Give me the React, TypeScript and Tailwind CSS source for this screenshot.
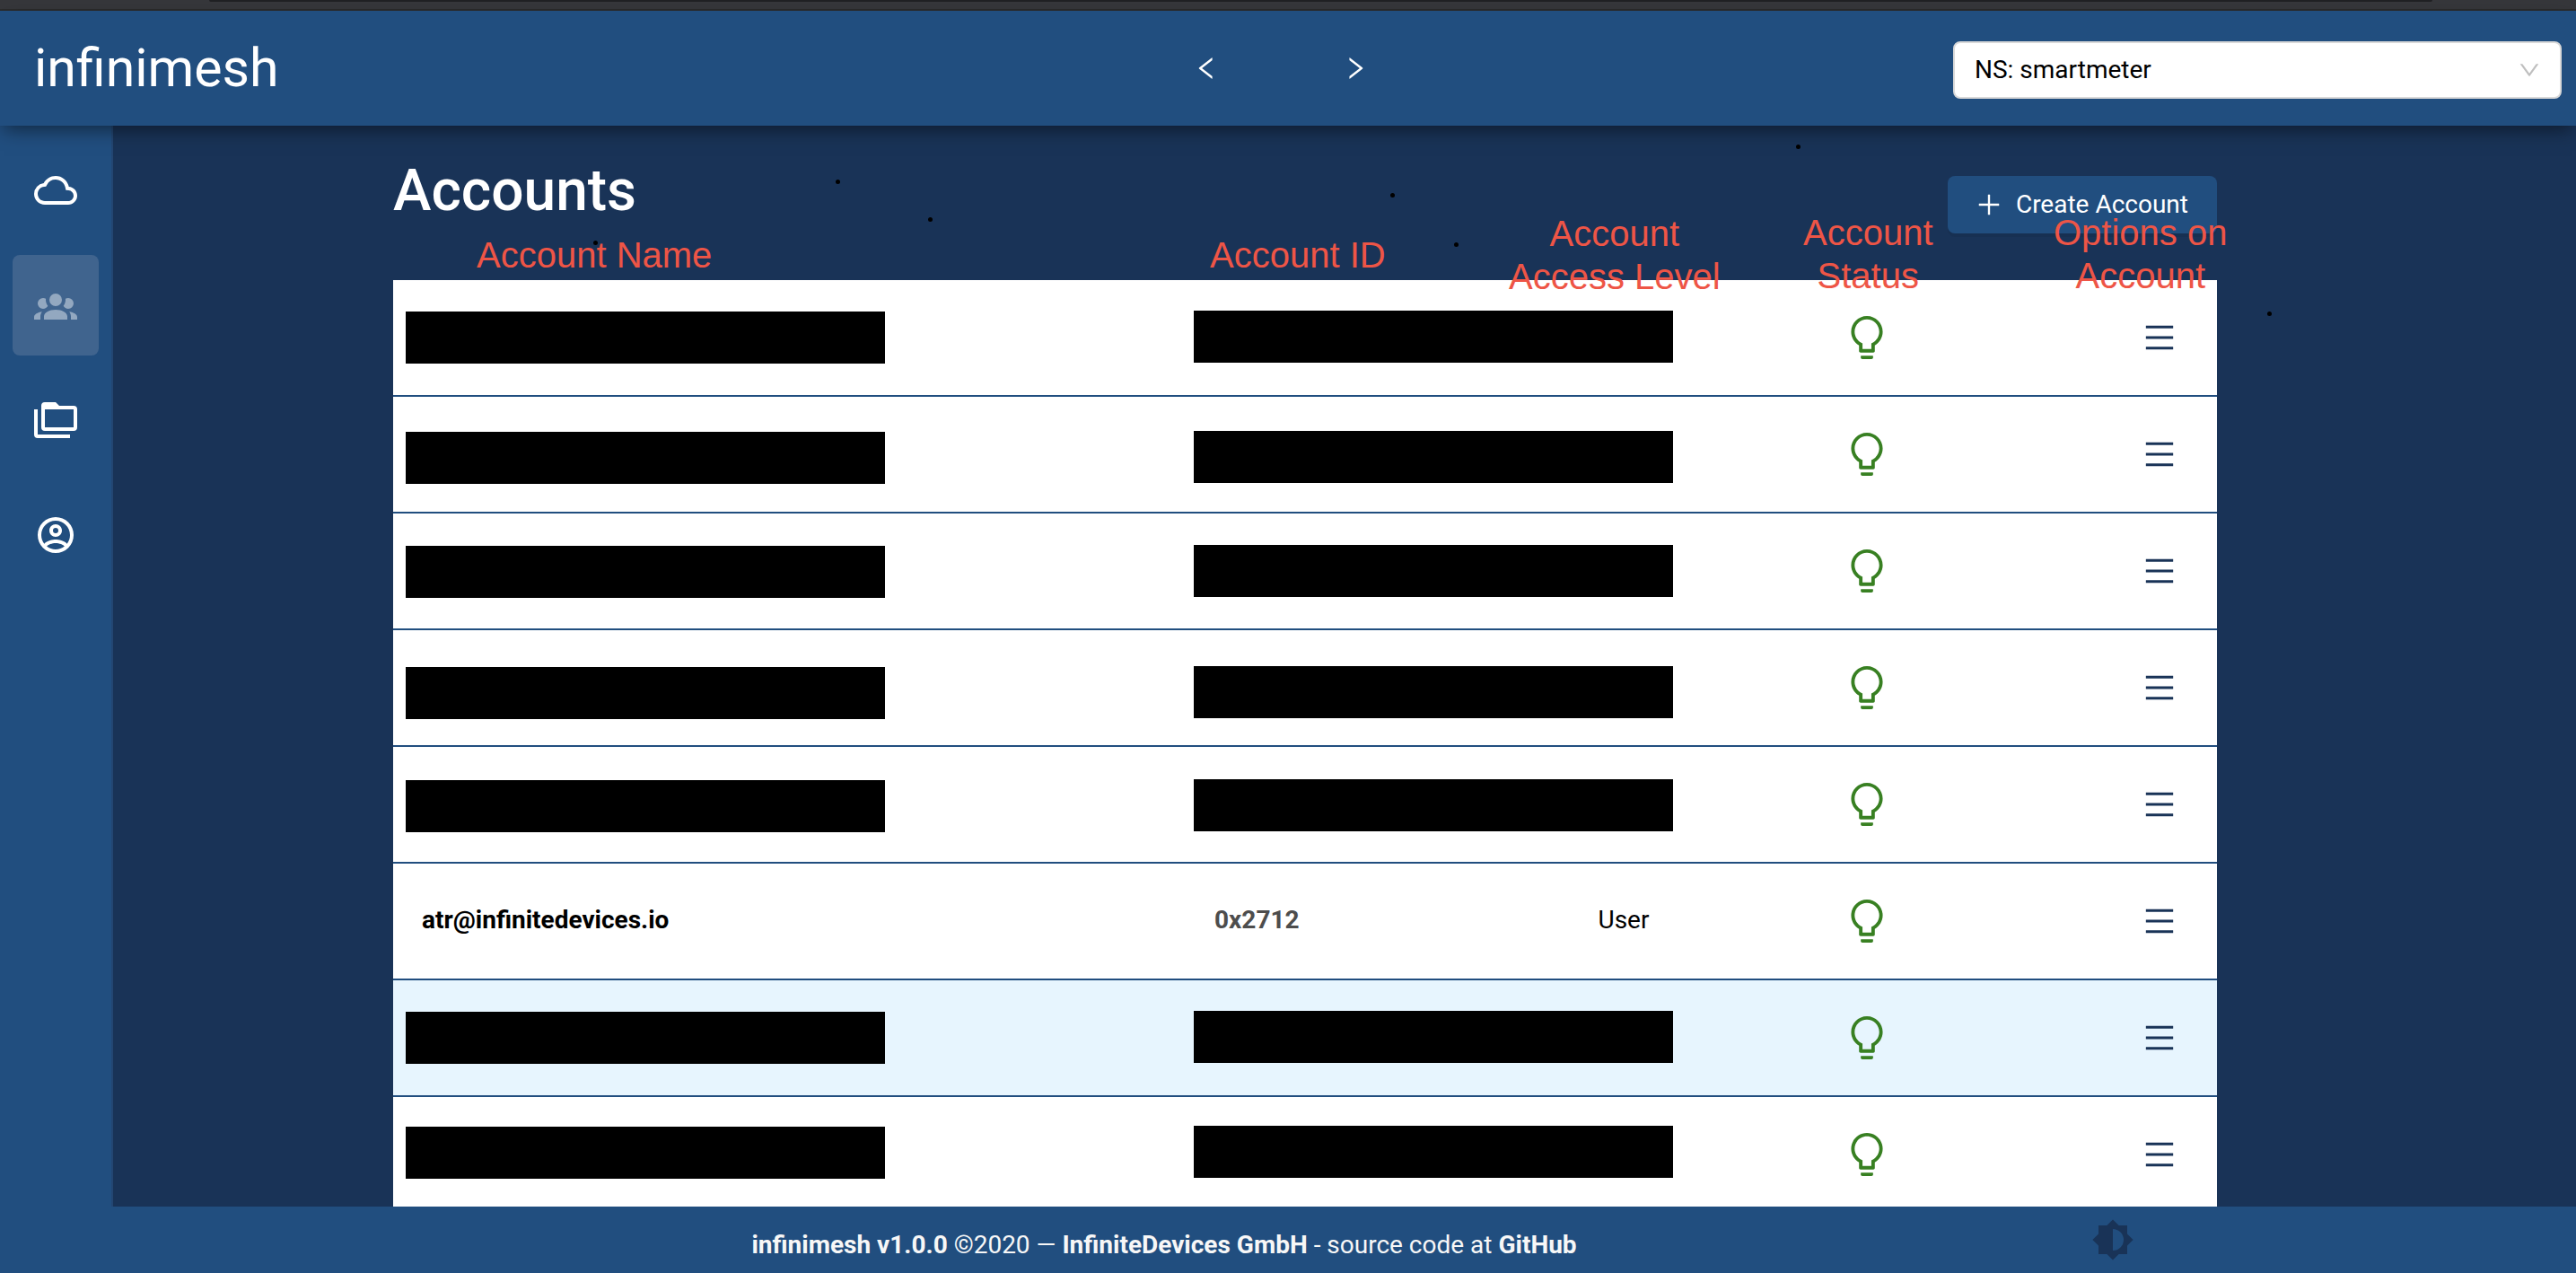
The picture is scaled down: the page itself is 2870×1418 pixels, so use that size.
import React from "react";

const ANT = "64 64 896 896";
const MDI = "0 0 24 24";

const paths = {
  cloud:
    "M19.35 10.04A7.49 7.49 0 0 0 12 4C9.11 4 6.6 5.64 5.35 8.04A5.994 5.994 0 0 0 0 14c0 3.31 2.69 6 6 6h13c2.76 0 5-2.24 5-5 0-2.64-2.05-4.78-4.65-4.96zM19 18H6c-2.21 0-4-1.79-4-4 0-2.05 1.53-3.76 3.56-3.97l1.07-.11.5-.95A5.469 5.469 0 0 1 12 6c2.62 0 4.88 1.86 5.39 4.43l.3 1.5 1.53.11A2.98 2.98 0 0 1 22 15c0 1.65-1.35 3-3 3z",
  group:
    "M12,5.5A3.5,3.5 0 0,1 15.5,9A3.5,3.5 0 0,1 12,12.5A3.5,3.5 0 0,1 8.5,9A3.5,3.5 0 0,1 12,5.5M5,8C5.56,8 6.08,8.15 6.53,8.42C6.38,9.85 6.8,11.27 7.66,12.38C7.16,13.34 6.16,14 5,14A3,3 0 0,1 2,11A3,3 0 0,1 5,8M19,8A3,3 0 0,1 22,11A3,3 0 0,1 19,14C17.84,14 16.84,13.34 16.34,12.38C17.2,11.27 17.62,9.85 17.47,8.42C17.92,8.15 18.44,8 19,8M5.5,18.25C5.5,16.18 8.41,14.5 12,14.5C15.59,14.5 18.5,16.18 18.5,18.25V20H5.5V18.25M0,20V18.5C0,17.11 1.89,15.94 4.45,15.6C3.86,16.28 3.5,17.22 3.5,18.25V20H0M24,20H20.5V18.25C20.5,17.22 20.14,16.28 19.55,15.6C22.11,15.94 24,17.11 24,18.5V20Z",
  folders:
    "M22,4A2,2 0 0,1 24,6V16A2,2 0 0,1 22,18H6A2,2 0 0,1 4,16V4A2,2 0 0,1 6,2H12L14,4H22M2,6V20H20V22H2A2,2 0 0,1 0,20V11H0V6H2M6,6V16H22V6H6Z",
  account:
    "M12,2A10,10 0 0,0 2,12A10,10 0 0,0 12,22A10,10 0 0,0 22,12A10,10 0 0,0 12,2M7.07,18.28C7.5,17.38 10.12,16.5 12,16.5C13.88,16.5 16.5,17.38 16.93,18.28C15.57,19.36 13.86,20 12,20C10.14,20 8.43,19.36 7.07,18.28M18.36,16.83C16.93,15.09 13.46,14.5 12,14.5C10.54,14.5 7.07,15.09 5.64,16.83C4.62,15.5 4,13.82 4,12C4,7.59 7.59,4 12,4C16.41,4 20,7.59 20,12C20,13.82 19.38,15.5 18.36,16.83M12,6C10.06,6 8.5,7.56 8.5,9.5C8.5,11.44 10.06,13 12,13C13.94,13 15.5,11.44 15.5,9.5C15.5,7.56 13.94,6 12,6M12,11A1.5,1.5 0 0,1 10.5,9.5A1.5,1.5 0 0,1 12,8A1.5,1.5 0 0,1 13.5,9.5A1.5,1.5 0 0,1 12,11Z",
  brightness:
    "M12,18V6A6,6 0 0,1 18,12A6,6 0 0,1 12,18M20,15.31L23.31,12L20,8.69V4H15.31L12,0.69L8.69,4H4V8.69L0.69,12L4,15.31V20H8.69L12,23.31L15.31,20H20V15.31Z",
  left: "M724 218.3V141c0-6.7-7.7-10.4-12.9-6.3L260.3 486.8a31.86 31.86 0 0 0 0 50.3l450.8 352.1c5.3 4.1 12.9.4 12.9-6.3v-77.3c0-4.9-2.3-9.6-6.1-12.6l-360-281 360-281.1c3.8-3 6.1-7.7 6.1-12.6z",
  right:
    "M765.7 486.8L314.9 134.7A7.97 7.97 0 0 0 302 141v77.3c0 4.9 2.3 9.6 6.1 12.6l360 281.1-360 281.1c-3.9 3-6.1 7.7-6.1 12.6V883c0 6.7 7.7 10.4 12.9 6.3l450.8-352.1a31.96 31.96 0 0 0 0-50.4z",
  down: "M884 256h-75c-5.1 0-9.9 2.5-12.9 6.6L512 654.2 227.9 262.6c-3-4.1-7.8-6.6-12.9-6.6h-75c-6.5 0-10.3 7.4-6.5 12.7l352.6 486.1c12.8 17.6 39 17.6 51.7 0l352.6-486.1c3.9-5.3.1-12.7-6.4-12.7z",
  plus: "M482 152h60q8 0 8 8v704q0 8-8 8h-60q-8 0-8-8V160q0-8 8-8zM160 474h704q8 0 8 8v60q0 8-8 8H160q-8 0-8-8v-60q0-8 8-8z",
  bulb: "M632 888H392c-4.4 0-8 3.6-8 8v32c0 17.7 14.3 32 32 32h192c17.7 0 32-14.3 32-32v-32c0-4.4-3.6-8-8-8zM512 64c-181.1 0-328 146.9-328 328 0 121.4 66 227.4 164 284.1V792c0 17.7 14.3 32 32 32h264c17.7 0 32-14.3 32-32V676.1c98-56.7 164-162.7 164-284.1 0-181.1-146.9-328-328-328zm127.9 549.8L604 634.6V752H420V634.6l-35.9-20.8C305.4 568.3 256 484.5 256 392c0-141.4 114.6-256 256-256s256 114.6 256 256c0 92.5-49.4 176.3-128.1 221.8z",
  menu: "M904 160H120c-4.4 0-8 3.6-8 8v64c0 4.4 3.6 8 8 8h784c4.4 0 8-3.6 8-8v-64c0-4.4-3.6-8-8-8zm0 624H120c-4.4 0-8 3.6-8 8v64c0 4.4 3.6 8 8 8h784c4.4 0 8-3.6 8-8v-64c0-4.4-3.6-8-8-8zm0-312H120c-4.4 0-8 3.6-8 8v64c0 4.4 3.6 8 8 8h784c4.4 0 8-3.6 8-8v-64c0-4.4-3.6-8-8-8z",
};

function Icon({ name, box = ANT, className }: { name: keyof typeof paths; box?: string; className: string }) {
  return (
    <svg viewBox={box} fill="currentColor" className={className} aria-hidden="true">
      <path d={paths[name]} />
    </svg>
  );
}

type Row = {
  account?: { name: string; id: string; level: string };
  nameBar?: string;
  idBar?: string;
  hovered?: boolean;
};

const rows: Row[] = [
  { nameBar: "top-[35px]", idBar: "top-[34px]" },
  { nameBar: "top-[39px]", idBar: "top-[38px]" },
  { nameBar: "top-[36px]", idBar: "top-[35px]" },
  { nameBar: "top-[41px]", idBar: "top-[40px]" },
  { nameBar: "top-[37px]", idBar: "top-[36px]" },
  { account: { name: "atr@infinitedevices.io", id: "0x2712", level: "User" } },
  { nameBar: "top-[35px]", idBar: "top-[34px]", hovered: true },
  { nameBar: "top-[33px]", idBar: "top-[32px]" },
];

const navItems: { name: keyof typeof paths; label: string; active?: boolean }[] = [
  { name: "cloud", label: "Devices" },
  { name: "group", label: "Accounts", active: true },
  { name: "folders", label: "Namespaces" },
  { name: "account", label: "Profile" },
];

const notes = [
  { text: ["Account Name"], place: "left-[531px] top-[260px]" },
  { text: ["Account ID"], place: "left-[1348px] top-[260px]" },
  { text: ["Account", "Access Level"], place: "left-[1681px] top-[236px]" },
  { text: ["Account", "Status"], place: "left-[2009px] top-[235px]" },
  { text: ["Options on", "Account"], place: "left-[2288px] top-[235px]" },
];

const dots = [
  "left-[661px] top-[268px]",
  "left-[931px] top-[200px]",
  "left-[1034px] top-[242px]",
  "left-[1549px] top-[215px]",
  "left-[1620px] top-[270px]",
  "left-[2001px] top-[161px]",
  "left-[2526px] top-[347px]",
];

function Header() {
  return (
    <header className="relative z-10 grid h-32 shrink-0 grid-cols-[1fr_auto_1fr] items-center bg-[#214e7f] pr-4 shadow-[0_8px_20px_-4px_rgba(0,0,0,0.5)]">
      <a href="#home" className="pl-[38px] text-[59px] leading-[72px] text-white">
        infinimesh
      </a>
      <nav className="flex gap-[138px] text-white" aria-label="History">
        <button type="button" aria-label="Back">
          <Icon name="left" className="size-7" />
        </button>
        <button type="button" aria-label="Forward">
          <Icon name="right" className="size-7" />
        </button>
      </nav>
      <div className="relative mt-1 w-[678px] justify-self-end">
        <select
          aria-label="Namespace"
          className="block h-16 w-full appearance-none rounded-lg border-2 border-[#d9d9d9] bg-white pl-[22px] text-[28px] text-black"
        >
          <option>NS: smartmeter</option>
        </select>
        <Icon name="down" className="pointer-events-none absolute top-5 right-6 size-6 text-[#bfbfbf]" />
      </div>
    </header>
  );
}

function Sidebar() {
  return (
    <aside className="w-[126px] shrink-0 border-r-2 border-[#234672] bg-[#214e7f] px-3.5 pt-4">
      <nav className="flex flex-col gap-4" aria-label="Main">
        {navItems.map((item) => (
          <a
            key={item.name}
            href={"#" + item.name}
            aria-label={item.label}
            className={
              item.active
                ? "flex h-28 items-center justify-center rounded-lg bg-[#40648e] text-[#93a8c0]"
                : "flex h-28 items-center justify-center rounded-lg text-white"
            }
          >
            <Icon name={item.name} box={MDI} className="size-12" />
          </a>
        ))}
      </nav>
    </aside>
  );
}

function AccountRow({ row }: { row: Row }) {
  const cell = "relative h-[130px] border-b-2 border-[#214e7f] p-0 align-middle";
  return (
    <tr className={row.hovered ? "bg-[#e7f5fe]" : "bg-white"}>
      <td className={cell}>
        {row.account && <span className="block pb-0.5 pl-8 font-bold">{row.account.name}</span>}
        {row.nameBar && <div className={"absolute left-3.5 h-[58px] w-[534px] bg-black " + row.nameBar} />}
      </td>
      <td className={cell}>
        {row.account && <span className="block pb-0.5 pl-[30px] font-bold text-[#4d4d4d]">{row.account.id}</span>}
        {row.idBar && <div className={"absolute left-[7px] z-10 h-[58px] w-[534px] bg-black " + row.idBar} />}
      </td>
      <td className={cell}>
        <span className="block pb-0.5 text-center">{row.account?.level}</span>
      </td>
      <td className={cell}>
        <Icon name="bulb" className="mx-auto size-12 text-[#388022]" />
      </td>
      <td className={cell}>
        <button type="button" aria-label="Account options" className="mr-[47px] ml-auto block text-[#193357]">
          <Icon name="menu" className="size-[34px]" />
        </button>
      </td>
    </tr>
  );
}

export default function App() {
  return (
    <div className="relative flex h-screen flex-col overflow-hidden bg-[#193357] font-['Roboto',sans-serif] text-[28px] leading-8">
      <div className="h-3 shrink-0 border-b-2 border-[#2b2b2b] bg-[#36373b] pr-[160px] pl-[233px]">
        <div className="h-0.5 rounded-b-sm bg-[#202124]" />
      </div>
      <Header />
      <div className="flex min-h-0 flex-1">
        <Sidebar />
        <main className="min-w-0 flex-1 overflow-hidden pr-[400px] pl-[312px]">
          <div className="flex h-[172px] items-start justify-between">
            <h1 className="pt-[33px] text-[64px] leading-20 font-medium text-white">Accounts</h1>
            <button
              type="button"
              className="mt-14 flex h-16 items-center gap-4 rounded-lg bg-[#214e7f] px-8 text-white shadow-[0_4px_0_rgba(0,0,0,0.05)]"
            >
              <Icon name="plus" className="size-7" />
              Create Account
            </button>
          </div>
          <table className="w-full table-fixed border-separate border-spacing-0">
            <colgroup>
              <col />
              <col className="w-[351px]" />
              <col className="w-[270px]" />
              <col className="w-[272px]" />
              <col className="w-[254px]" />
            </colgroup>
            <tbody>
              {rows.map((row, i) => (
                <AccountRow key={i} row={row} />
              ))}
            </tbody>
          </table>
        </main>
      </div>
      <footer className="z-10 flex h-[74px] shrink-0 items-center bg-[#214e7f] pr-[492px] pl-[264px] text-[#f7f7f7]">
        <p className="flex-1 pt-3 text-center">
          <b>infinimesh v1.0.0</b> ©2020 —{" "}
          <a href="#company" className="font-bold">
            InfiniteDevices GmbH
          </a>{" "}
          - source code at{" "}
          <a href="#github" className="font-bold">
            GitHub
          </a>
        </p>
        <button type="button" aria-label="Toggle theme" className="text-[#193357]">
          <Icon name="brightness" box={MDI} className="size-12" />
        </button>
      </footer>

      {dots.map((place) => (
        <span key={place} className={"absolute z-20 size-[5px] rounded-full bg-black " + place} />
      ))}
      {notes.map((note) => (
        <p
          key={note.place}
          className={
            "pointer-events-none absolute z-20 text-center font-['Liberation_Sans',sans-serif] text-[40px] leading-12 text-[#ee5546] " +
            note.place
          }
        >
          {note.text.map((line) => (
            <span key={line} className="block">
              {line}
            </span>
          ))}
        </p>
      ))}
    </div>
  );
}
